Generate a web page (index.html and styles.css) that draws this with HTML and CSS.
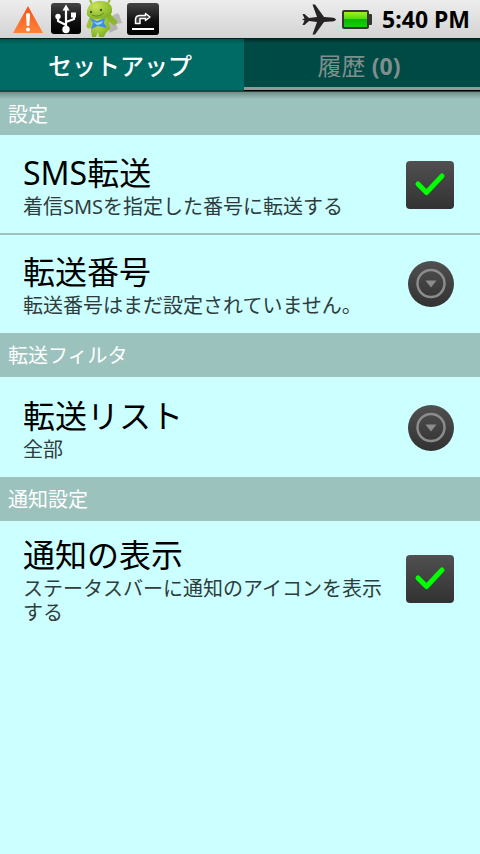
FILE: index.html
```html
<!DOCTYPE html>
<html lang="ja">
<head>
<meta charset="utf-8">
<meta name="viewport" content="width=device-width, initial-scale=1">
<title>SMS転送</title>
<link rel="stylesheet" href="styles.css">
</head>
<body>
<header class="status">
  <div class="status-left">
    <svg width="32" height="38" viewBox="0 0 32 38" aria-hidden="true">
      <defs><linearGradient id="warn" x1="0" y1="0" x2="0" y2="1"><stop offset="0" stop-color="#f2561c"/><stop offset="1" stop-color="#ff8238"/></linearGradient></defs>
      <path d="M16 6 L31 33 H1 Z" fill="url(#warn)"/>
      <path d="M14 14.5 Q14 13 16 13 Q18 13 18 14.5 L17.3 26 H14.7 Z" fill="#fff"/><circle cx="16" cy="29.500" r="2" fill="#fff"/>
    </svg>
    <svg width="32" height="38" viewBox="0 0 32 38" aria-hidden="true">
      <defs><linearGradient id="chip" x1="0" y1="0" x2="0" y2="1"><stop offset="0" stop-color="#454545"/><stop offset=".55" stop-color="#111"/><stop offset="1" stop-color="#000"/></linearGradient></defs>
      <rect x="1" y="3" width="30" height="31" rx="3" fill="url(#chip)"/>
      <path d="M16 28 V9 M16 25 L8 21 V16 M16 22 L24 19 V15" fill="none" stroke="#fff" stroke-width="2.200" stroke-linejoin="round"/>
      <path d="M16 4.500 L19.500 10.500 H12.500 Z" fill="#fff"/>
      <circle cx="8" cy="16.500" r="2.700" fill="#fff"/><rect x="21" y="12.500" width="5" height="5" fill="#fff"/><circle cx="16" cy="29.500" r="3.700" fill="#fff"/>
    </svg>
    <svg width="38" height="38" viewBox="0 0 38 38" aria-hidden="true">
      <defs><radialGradient id="droid" cx=".35" cy=".3" r=".8"><stop offset="0" stop-color="#c9e45c"/><stop offset="1" stop-color="#7aac1c"/></radialGradient></defs>
      <path d="M26 17 Q34 10 35 17 L37 23 L31 24 L33 29 L24 33 Z" fill="#777" opacity=".4"/>
      <path d="M7 4 L5 0 M23 3 L25 0" stroke="#8fb82b" stroke-width="2"/>
      <path d="M23 16 L29 22" stroke="#8ab82a" stroke-width="6" stroke-linecap="round"/>
      <path d="M7 18 L4 26" stroke="#9cc33b" stroke-width="5" stroke-linecap="round"/>
      <path d="M7 16 H24 L25 29 Q20 33 19 37 H14 L13 32 L11 37 H7 L6 30 Z" fill="url(#droid)"/>
      <path d="M2 15 Q1 3 13 1 Q26 0 27 9 Q28 16 20 18 Q6 21 2 15 Z" fill="url(#droid)"/>
      <circle cx="6" cy="12" r="1.200" fill="#3d5a12"/><circle cx="16" cy="10" r="1.200" fill="#3d5a12"/>
      <path d="M7 15 Q13 18 19 13" stroke="#628b1d" fill="none"/>
      <path d="M5 18 L12 21 L20 18 L19 23 L22 28 L13 26 L6 29 L8 23 Z" fill="#3e8ee6"/><path d="M8 21 L12 23 L18 21 L16 24 L12 25 Z" fill="#a9d4ff"/>
    </svg>
    <svg width="34" height="38" viewBox="0 0 34 38" aria-hidden="true">
      <rect x="1" y="3" width="32" height="32" rx="3" fill="url(#chip)"/>
      <path d="M9.500 23.500 V19 Q10 15.500 14 15.500 H19.500 V13.500 L24 17 L19.500 20.500 V18.500 H14 V23.500 Z" fill="#444" stroke="#fff" stroke-width="1.500" stroke-linejoin="round"/>
      <path d="M6 29 H28" stroke="#fff" stroke-width="2"/>
    </svg>
  </div>
  <div class="status-right">
    <svg width="36" height="38" viewBox="0 0 36 38" aria-hidden="true">
      <path d="M35 19.500 Q34 17.500 30 17.500 L23 17 L14 4.500 L11.500 4.500 L16 17 L8 18 L3.500 14 L1.500 14 L3.500 18.500 L1 19.500 L3.500 20.500 L1.500 25 L3.500 25 L8 21 L16 22 L11.500 34.500 L14 34.500 L23 22 L30 21.500 Q34 21.500 35 19.500 Z" fill="#262324"/>
    </svg>
    <svg width="30" height="38" viewBox="0 0 30 38" aria-hidden="true">
      <defs><linearGradient id="bat" x1="0" y1="0" x2="0" y2="1"><stop offset="0" stop-color="#9af51c"/><stop offset=".45" stop-color="#56d80c"/><stop offset=".5" stop-color="#08b900"/><stop offset="1" stop-color="#16cf08"/></linearGradient></defs>
      <rect x="0" y="10" width="27" height="19" rx="2" fill="#353535"/><rect x="26" y="14" width="4" height="11" rx="1" fill="#353535"/>
      <rect x="2" y="12" width="23" height="15" fill="url(#bat)"/>
    </svg>
    <span class="clock">5:40 PM</span>
  </div>
</header>
<nav class="tabs">
  <button class="tab tab-active" type="button">セットアップ</button>
  <button class="tab" type="button">履歴 <span class="count">(0)</span></button>
</nav>
<main>
  <section>
    <h2 class="heading heading-first">設定</h2>
    <label class="row row-divided">
      <span class="text"><span class="title">SMS転送</span><span class="summary">着信SMSを指定した番号に転送する</span></span>
      <span class="widget">
        <input class="check" type="checkbox" checked>
        <svg class="tick" viewBox="0 0 48 48" aria-hidden="true"><path d="M12 23 L20.500 31.500 L36 15"/></svg>
      </span>
    </label>
    <button class="row" type="button">
      <span class="text"><span class="title">転送番号</span><span class="summary">転送番号はまだ設定されていません。</span></span>
      <svg class="widget" viewBox="0 0 48 48" aria-hidden="true">
        <defs><linearGradient id="knob" x1="0" y1="0" x2="0" y2="1"><stop offset="0" stop-color="#505050"/><stop offset="1" stop-color="#323232"/></linearGradient></defs>
        <circle cx="25" cy="24" r="23" fill="url(#knob)"/><circle cx="25" cy="23.500" r="13.500" fill="none" stroke="#8c8c8c" stroke-width="2.500"/><path d="M19.500 20.500 H30.500 L25 27.500 Z" fill="#8c8c8c"/>
      </svg>
    </button>
  </section>
  <section>
    <h2 class="heading">転送フィルタ</h2>
    <button class="row row-single" type="button">
      <span class="text"><span class="title">転送リスト</span><span class="summary">全部</span></span>
      <svg class="widget" viewBox="0 0 48 48" aria-hidden="true">
        <circle cx="25" cy="24" r="23" fill="url(#knob)"/><circle cx="25" cy="23.500" r="13.500" fill="none" stroke="#8c8c8c" stroke-width="2.500"/><path d="M19.500 20.500 H30.500 L25 27.500 Z" fill="#8c8c8c"/>
      </svg>
    </button>
  </section>
  <section>
    <h2 class="heading">通知設定</h2>
    <label class="row">
      <span class="text"><span class="title">通知の表示</span><span class="summary">ステータスバーに通知のアイコンを表示する</span></span>
      <span class="widget">
        <input class="check" type="checkbox" checked>
        <svg class="tick" viewBox="0 0 48 48" aria-hidden="true"><path d="M12 23 L20.500 31.500 L36 15"/></svg>
      </span>
    </label>
  </section>
</main>
</body>
</html>
```
FILE: styles.css
```css
* {
  box-sizing: border-box;
}

body {
  margin: 0;
  min-height: 100vh;
  background: #cff;
  color: #000;
  font-family: "Noto Sans", "Noto Sans CJK JP", sans-serif;
}

button {
  border: 0;
  margin: 0;
  background: none;
  color: inherit;
  font-family: inherit;
}

.status {
  display: flex;
  justify-content: space-between;
  height: 38px;
  padding: 0 10px 0 12px;
  background: linear-gradient(#ededed, #d3d3d3);
}

.status-left,
.status-right {
  display: flex;
  align-items: center;
}

.status-left {
  gap: 3px;
}

.status-left svg:first-child {
  margin-right: 3px;
}

.status-right {
  gap: 5px;
}

.clock {
  margin-left: 5px;
  font-size: 23px;
  font-weight: 700;
  line-height: 38px;
}

.tabs {
  display: grid;
  grid-template-columns: 244fr 236fr;
  height: 54px;
  border-top: 1px solid #002220;
  border-bottom: 1px solid #30413e;
}

.tab {
  padding: 0 6px 0 0;
  background: linear-gradient(#002b28, #004a45 4px);
  border-bottom: 1px solid #000;
  box-shadow: inset 0 -3px #939b9a;
  color: #7f8f8c;
  font-size: 24px;
  font-weight: 400;
}

.count {
  font-size: 23px;
  font-weight: 700;
}

.tab-active {
  padding: 0 4px 0 0;
  background: linear-gradient(#00524d, #006b65 5px);
  border-bottom-color: #00504b;
  box-shadow: none;
  color: #fff;
  font-weight: 500;
}

.heading {
  margin: 0;
  padding: 2px 8px 0;
  background: #9cc2bd;
  color: #fff;
  font-size: 20px;
  font-weight: 400;
  line-height: 42px;
}

.heading-first {
  background: linear-gradient(#708c88, #9cc2bd 7px);
  line-height: 41px;
}

.row {
  display: flex;
  align-items: center;
  justify-content: space-between;
  gap: 16px;
  width: 100%;
  min-height: 98px;
  padding: 12px 26px 12px 23px;
  text-align: left;
}

.row-divided {
  min-height: 100px;
  padding-top: 14px;
  border-bottom: 2px solid #9cc2bd;
}

.row-single {
  min-height: 100px;
  padding-top: 14px;
}

.text {
  flex: 1;
}

.title,
.summary {
  display: block;
}

.title {
  font-size: 32px;
  line-height: 44px;
}

.summary {
  color: #2f3c3c;
  font-size: 20px;
  line-height: 24px;
}

.widget {
  display: grid;
  flex: none;
  width: 48px;
  height: 48px;
}

.check,
.tick {
  grid-area: 1 / 1;
  width: 48px;
  height: 48px;
  margin: 0;
}

.check {
  appearance: none;
  border-radius: 4px;
  background: linear-gradient(#505050, #323232);
}

.tick {
  display: none;
  fill: none;
  stroke: #0f0;
  stroke-width: 5;
  stroke-linecap: round;
  stroke-linejoin: round;
  pointer-events: none;
}

.check:checked + .tick {
  display: block;
}
```
